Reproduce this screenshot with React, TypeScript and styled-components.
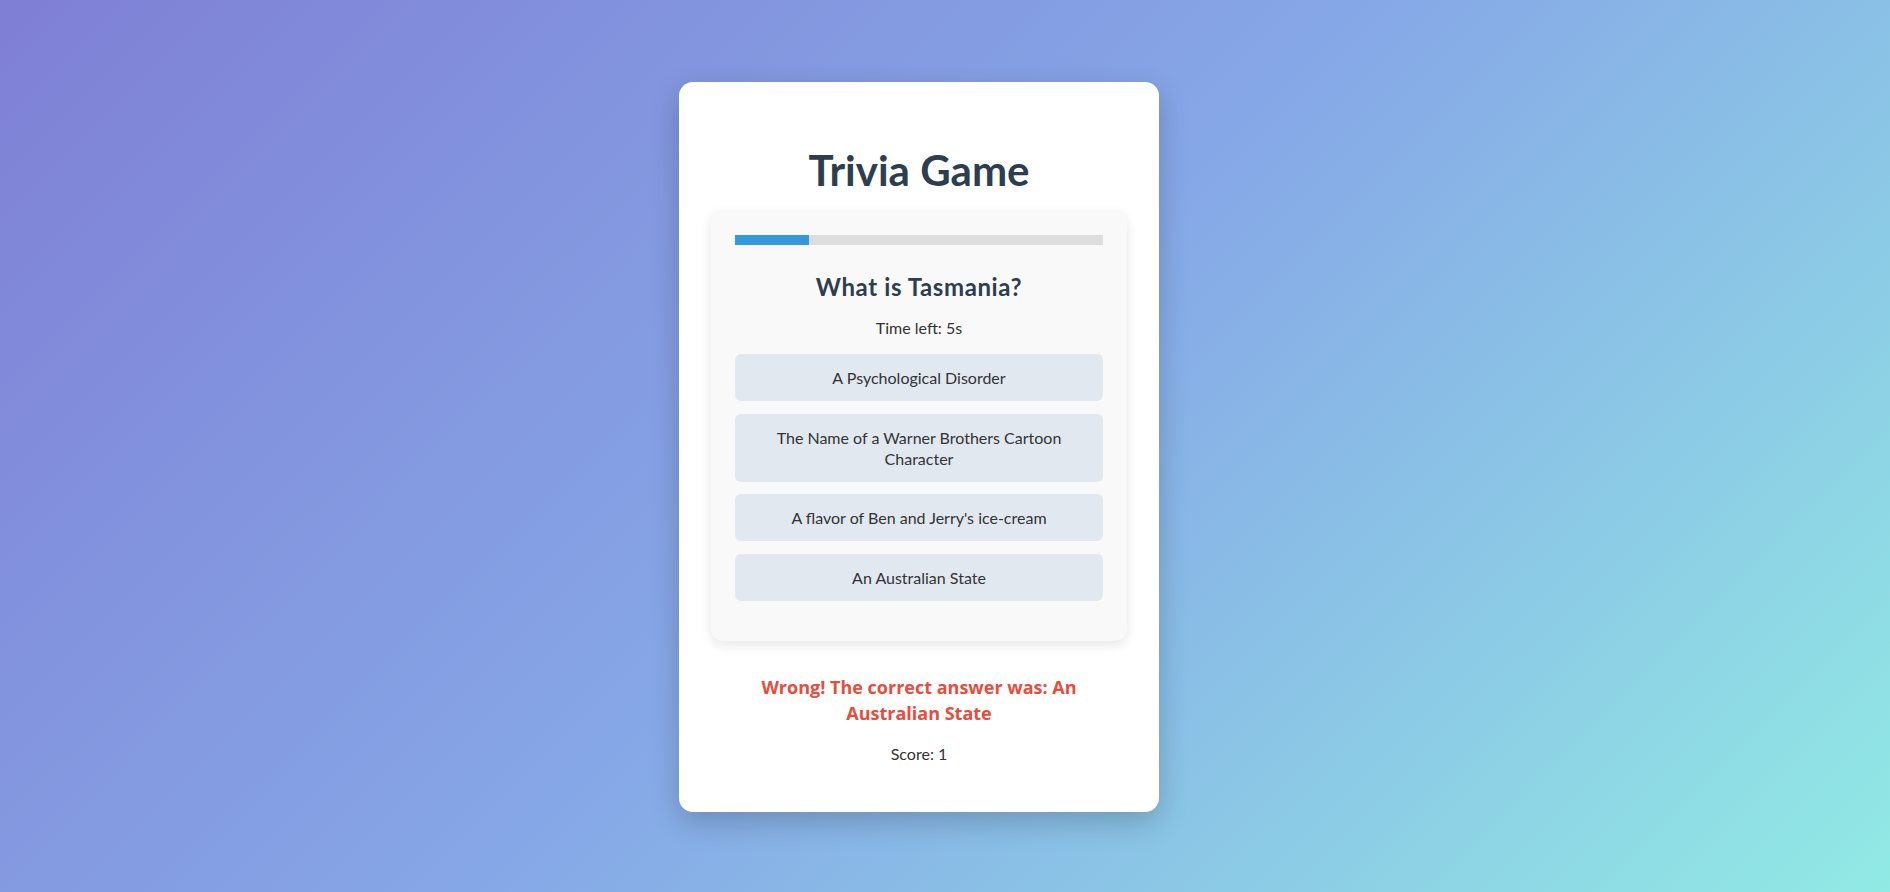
import React from "react";
import styled, { createGlobalStyle } from "styled-components";

const GlobalStyle = createGlobalStyle`
  * { box-sizing: border-box; }
  html, body { margin: 0; padding: 0; }
  body {
    font-family: Lato, "Open Sans", sans-serif;
    background: linear-gradient(135deg, #7f7fd5 0%, #86a8e7 50%, #91eae4 100%);
    min-height: 892px;
    color: #333;
  }
`;

const Page = styled.div`
  min-height: 892px;
  display: flex;
  align-items: center;
  justify-content: center;
  padding-right: 52px;
  padding-top: 2px;
`;

const Card = styled.div`
  width: 480px;
  background: #fff;
  border-radius: 14px;
  padding: 32px 32px 32px;
  box-shadow: 0 10px 30px rgba(0, 0, 0, 0.2);
  text-align: center;
`;

const Title = styled.h1`
  margin: 31px 0 15px;
  font-size: 42px;
  line-height: 50px;
  font-weight: 700;
  color: #2c3e50;
`;

const QuestionCard = styled.div`
  background: #f9f9f9;
  border-radius: 12px;
  padding: 25px 24px 40px;
  box-shadow: 0 4px 12px rgba(0, 0, 0, 0.1);
`;

const Progress = styled.div`
  height: 10px;
  background: #ddd;
  margin-bottom: 26px;
`;

const ProgressFill = styled.div`
  height: 100%;
  background: #3498db;
`;

const Question = styled.h2`
  margin: 0 0 14px;
  font-size: 24px;
  line-height: 32px;
  font-weight: 700;
  letter-spacing: 0.6px;
  color: #2c3e50;
`;

const Timer = styled.p`
  margin: 0 0 15px;
  font-size: 16px;
  line-height: 22px;
  color: #333;
`;

const Options = styled.div`
  display: flex;
  flex-direction: column;
  gap: 12.5px;
`;

const Option = styled.button`
  display: block;
  width: 100%;
  border: none;
  border-radius: 6px;
  background: #e2e8f0;
  padding: 13px 20px;
  font-family: inherit;
  font-size: 16px;
  line-height: 21px;
  color: #333;
  cursor: pointer;
`;

const Feedback = styled.p`
  margin: 33px 20px 17px;
  font-family: "Open Sans", Lato, sans-serif;
  font-size: 18px;
  line-height: 26px;
  font-weight: 700;
  color: #e74c3c;
`;

const Score = styled.p`
  margin: 0 0 15px;
  font-size: 16px;
  line-height: 22px;
  color: #333;
`;

const options = [
  "A Psychological Disorder",
  "The Name of a Warner Brothers Cartoon Character",
  "A flavor of Ben and Jerry's ice-cream",
  "An Australian State",
];

export default function App() {
  const progress = 20;
  return (
    <>
      <GlobalStyle />
      <Page>
        <Card>
          <Title>Trivia Game</Title>
          <QuestionCard>
            <Progress>
              <ProgressFill style={{ width: `${progress}%` }} />
            </Progress>
            <Question>What is Tasmania?</Question>
            <Timer>Time left: 5s</Timer>
            <Options>
              {options.map((o) => (
                <Option key={o}>{o}</Option>
              ))}
            </Options>
          </QuestionCard>
          <Feedback>Wrong! The correct answer was: An Australian State</Feedback>
          <Score>Score: 1</Score>
        </Card>
      </Page>
    </>
  );
}
